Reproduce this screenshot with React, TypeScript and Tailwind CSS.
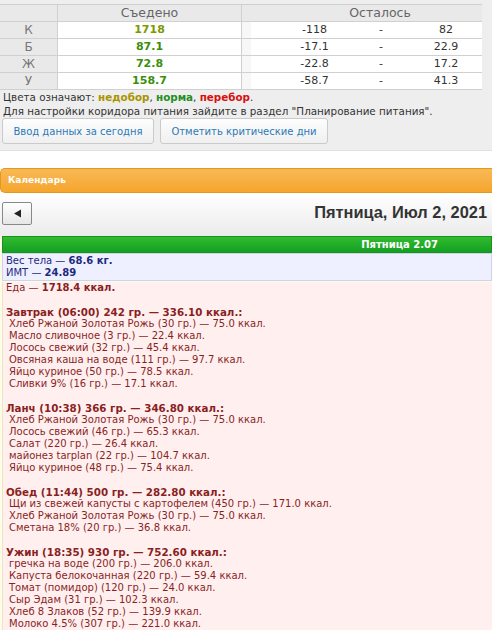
import React from 'react';

const font = { fontFamily: '"DejaVu Sans", Verdana, sans-serif' };

const rows = [
  { label: 'К', eaten: '1718', color: 'text-[#7a9a00]', low: '-118', high: '82' },
  { label: 'Б', eaten: '87.1', color: 'text-[#3a8f0a]', low: '-17.1', high: '22.9' },
  { label: 'Ж', eaten: '72.8', color: 'text-[#3a8f0a]', low: '-22.8', high: '17.2' },
  { label: 'У', eaten: '158.7', color: 'text-[#3a8f0a]', low: '-58.7', high: '41.3' },
];

interface Meal {
  title: string;
  items: string[];
}

const meals: Meal[] = [
  {
    title: 'Завтрак (06:00) 242 гр. — 336.10 ккал.:',
    items: [
      'Хлеб Ржаной Золотая Рожь (30 гр.) — 75.0 ккал.',
      'Масло сливочное (3 гр.) — 22.4 ккал.',
      'Лосось свежий (32 гр.) — 45.4 ккал.',
      'Овсяная каша на воде (111 гр.) — 97.7 ккал.',
      'Яйцо куриное (50 гр.) — 78.5 ккал.',
      'Сливки 9% (16 гр.) — 17.1 ккал.',
    ],
  },
  {
    title: 'Ланч (10:38) 366 гр. — 346.80 ккал.:',
    items: [
      'Хлеб Ржаной Золотая Рожь (30 гр.) — 75.0 ккал.',
      'Лосось свежий (46 гр.) — 65.3 ккал.',
      'Салат (220 гр.) — 26.4 ккал.',
      'майонез tarplan (22 гр.) — 104.7 ккал.',
      'Яйцо куриное (48 гр.) — 75.4 ккал.',
    ],
  },
  {
    title: 'Обед (11:44) 500 гр. — 282.80 ккал.:',
    items: [
      'Щи из свежей капусты с картофелем (450 гр.) — 171.0 ккал.',
      'Хлеб Ржаной Золотая Рожь (30 гр.) — 75.0 ккал.',
      'Сметана 18% (20 гр.) — 36.8 ккал.',
    ],
  },
  {
    title: 'Ужин (18:35) 930 гр. — 752.60 ккал.:',
    items: [
      'гречка на воде (200 гр.) — 206.0 ккал.',
      'Капуста белокочанная (220 гр.) — 59.4 ккал.',
      'Томат (помидор) (120 гр.) — 24.0 ккал.',
      'Сыр Эдам (31 гр.) — 102.3 ккал.',
      'Хлеб 8 Злаков (52 гр.) — 139.9 ккал.',
      'Молоко 4.5% (307 гр.) — 221.0 ккал.',
    ],
  },
];

export default function App() {
  return (
    <div className="w-[492px] h-[630px] overflow-hidden bg-white text-[#333]" style={font}>
      {/* Summary table */}
      <div className="bg-[#eeeeee] pt-[4px] pb-[6px] border-b border-[#dde3dd]">
        <div className="w-[482px] bg-[#d0d0d0] border-y border-[#d0d0d0] grid grid-cols-[57px_183px_240px] gap-[1px] text-[12px]">
          <div className="bg-[#e9e9e9] h-[16px]" />
          <div className="bg-[#e9e9e9] h-[16px] text-center leading-[16px] text-[#666] text-[12.5px]">Съедено</div>
          <div className="bg-[#e9e9e9] h-[16px] text-center leading-[16px] text-[#666] text-[12.5px] pl-[36px]">Осталось</div>
          {rows.map((r) => (
            <React.Fragment key={r.label}>
              <div className="bg-[#e9e9e9] h-[16px] leading-[16px] text-center text-[#777] text-[12px]">{r.label}</div>
              <div className={`bg-white h-[16px] leading-[16px] text-center font-bold text-[11px] ${r.color}`}>{r.eaten}</div>
              <div className="bg-white h-[16px] leading-[16px] flex text-[11px] text-[#333]">
                <div className="bg-[#f7f7f7] w-[9px]" />
                <div className="w-[127px] text-center">{r.low}</div>
                <div className="w-[6px] text-center">-</div>
                <div className="ml-auto w-[72px] text-center">{r.high}</div>
              </div>
            </React.Fragment>
          ))}
        </div>
        <div className="px-[3px] pt-[1px] text-[10.35px] leading-[13.5px] text-[#333]">
          <div>
            Цвета означают: <b className="text-[#a89400]">недобор</b>,{' '}
            <b className="text-[#1f8f1f]">норма</b>, <b className="text-[#d81010]">перебор</b>.
          </div>
          <div>Для настройки коридора питания зайдите в раздел "Планирование питания".</div>
        </div>
        <div className="flex gap-[6px] pl-[2px]">
          <button className="h-[26px] w-[152px] rounded-[3px] border border-[#cacaca] bg-gradient-to-b from-[#fdfdfd] to-[#f0f0f0] text-[10px] text-[#2a7ab8]">
            Ввод данных за сегодня
          </button>
          <button className="h-[26px] w-[168px] rounded-[3px] border border-[#cacaca] bg-gradient-to-b from-[#fdfdfd] to-[#f0f0f0] text-[10px] text-[#2a7ab8]">
            Отметить критические дни
          </button>
        </div>
      </div>

      <div className="h-[17px] bg-white" />

      {/* Calendar header */}
      <div className="h-[25px] rounded-l-[5px] border border-r-0 border-[#e5981c] bg-gradient-to-b from-[#f8b955] to-[#f5a52b] pl-[7px] flex items-center text-white font-bold text-[9px]">
        Календарь
      </div>

      <div className="h-[43px] bg-gradient-to-b from-white to-[#ebebeb] flex items-center justify-between pl-[2px] pr-[5px]">
        <button className="w-[30px] h-[23px] border border-[#888] rounded-[2px] bg-gradient-to-b from-white to-[#e6e6e6] flex items-center justify-center mt-[-3px]">
          <svg width="9" height="9" viewBox="0 0 9 9">
            <path d="M1 4.5 L8 0.5 L8 8.5 Z" fill="#222" />
          </svg>
        </button>
        <div className="font-bold text-[16.4px] text-[#333] mt-[-4px]" style={{ fontFamily: '"Liberation Sans", Arial, sans-serif' }}>
          Пятница, Июл 2, 2021
        </div>
      </div>

      {/* Day block */}
      <div className="pl-[2px] bg-[#fdfde6]">
        <div className="h-[17px] border border-[#1d8f1d] bg-gradient-to-b from-[#30bb30] to-[#11a021] flex items-center justify-end pr-[53px] text-white font-bold text-[10px]">
          Пятница 2.07
        </div>
        <div className="pb-[1px]">
          <div className="bg-[#eef0ff] border border-[#cdd3ee] px-[3px] py-[1px] text-[10px] leading-[12px] text-[#1e2a80]">
            <div>
              Вес тела — <b>68.6 кг.</b>
            </div>
            <div>
              ИМТ — <b>24.89</b>
            </div>
          </div>
        </div>
        <div className="bg-[#fff0ef] border-l border-[#f0e4c8] px-[3px] text-[10px] leading-[12px] text-[#8a1f1f] whitespace-pre">
          <div>
            Еда — <b>1718.4 ккал.</b>
          </div>
          {meals.map((m) => (
            <div key={m.title}>
              <div>&nbsp;</div>
              <div className="font-bold text-[10.3px]">{m.title}</div>
              {m.items.map((it, i) => (
                <div key={i} className="pl-[3px]">{it}</div>
              ))}
            </div>
          ))}
        </div>
      </div>
    </div>
  );
}
